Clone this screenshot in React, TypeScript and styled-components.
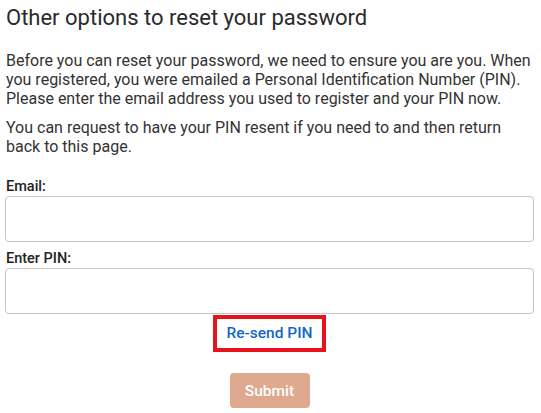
import React from "react";
import styled, { createGlobalStyle } from "styled-components";

const Global = createGlobalStyle`
  html, body { margin: 0; padding: 0; background: #fff; }
  body { font-family: Roboto, "Liberation Sans", Arial, sans-serif; color: #212121; }
  * { box-sizing: border-box; }
`;

const Page = styled.div`
  display: flex;
  flex-direction: column;
  padding: 5px 7px 0 5px;
`;

const Title = styled.h1`
  margin: 0 0 21px 1px;
  font-size: 22px;
  line-height: 25px;
  font-weight: 400;
  color: #2a2a2a;
`;

const Para = styled.p<{ $gap: number }>`
  margin: 0 0 ${(p) => p.$gap}px 1px;
  font-size: 16px;
  line-height: 19px;
  color: #333;
`;

const Field = styled.div`
  display: flex;
  flex-direction: column;
  margin-bottom: 8px;
`;

const Label = styled.label`
  font-size: 14.5px;
  line-height: 17px;
  font-weight: 500;
  color: #222;
  margin: 0 0 1px 1px;
`;

const Input = styled.input`
  height: 46px;
  width: 100%;
  border: 1px solid #c4c4c4;
  border-radius: 4px;
  font: inherit;
  padding: 0 10px;
  outline: none;
`;

const Center = styled.div`
  display: flex;
  flex-direction: column;
  align-items: center;
`;

const ResendLink = styled.a`
  display: block;
  border: 4px solid #e8121d;
  padding: 0 9px;
  height: 37px;
  line-height: 29px;
  font-size: 15.5px;
  font-weight: 500;
  color: #1467c4;
  text-decoration: none;
  margin-top: -7px;
`;

const Submit = styled.button`
  margin-top: 21px;
  width: 80px;
  height: 35px;
  border: none;
  border-radius: 4px;
  background: #dea98f;
  color: #fff;
  font-family: Roboto, "Liberation Sans", Arial, sans-serif;
  font-size: 15.5px;
  font-weight: 500;
`;

export default function App() {
  return (
    <>
      <Global />
      <Page>
        <Title>Other options to reset your password</Title>
        <Para $gap={10}>
          Before you can reset your password, we need to ensure you are you. When you registered, you were emailed a
          Personal Identification Number (PIN). Please enter the email address you used to register and your PIN now.
        </Para>
        <Para $gap={22}>
          You can request to have your PIN resent if you need to and then return back to this page.
        </Para>
        <Field>
          <Label htmlFor="email">Email:</Label>
          <Input id="email" type="email" />
        </Field>
        <Field>
          <Label htmlFor="pin">Enter PIN:</Label>
          <Input id="pin" type="text" />
        </Field>
        <Center>
          <ResendLink href="#">Re-send PIN</ResendLink>
          <Submit type="button">Submit</Submit>
        </Center>
      </Page>
    </>
  );
}
